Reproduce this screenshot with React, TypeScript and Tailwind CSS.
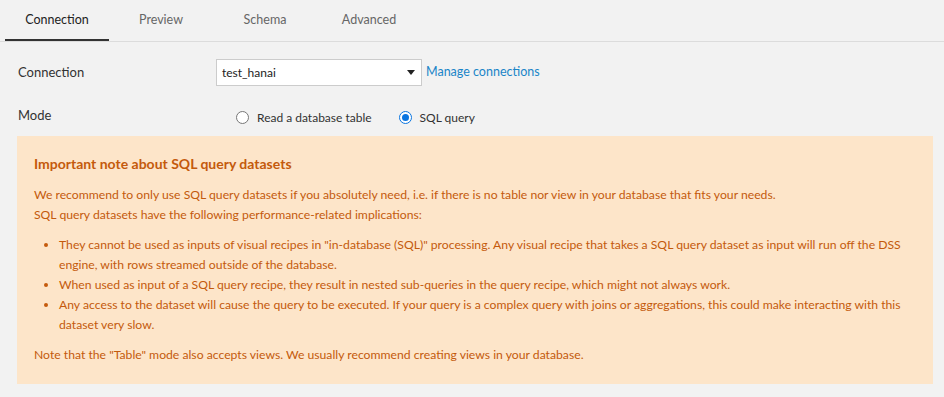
import { useState } from "react";

const tabs = ["Connection", "Preview", "Schema", "Advanced"];

const App = () => {
  const [mode, setMode] = useState("sql");
  return (
    <div className="w-[944px] h-[397px] bg-[#f2f2f2] font-['Lato',sans-serif] text-[#333] overflow-hidden">
      <div className="flex px-[5px] border-b border-[#dcdcdc] h-[42px]">
        {tabs.map((t, i) => (
          <div
            key={t}
            className={`w-[104px] flex items-center justify-center pt-[1px] text-[12.5px] border-b-2 ${
              i === 0 ? "border-[#333] text-[#222]" : "border-transparent text-[#666]"
            }`}
          >
            {t}
          </div>
        ))}
      </div>

      <div className="px-[17px]">
        <div className="flex items-center mt-[17px] h-[27px]">
          <div className="w-[199px] pl-[1px] pt-[1px] text-[13px]">Connection</div>
          <div className="w-[206px] h-[27px] bg-white border border-[#ccc] flex items-center justify-between pl-[5px] pr-[6px] text-[12px] text-[#222]">
            <span>test_hanai</span>
            <span className="w-0 h-0 border-l-[4px] border-r-[4px] border-t-[5px] border-l-transparent border-r-transparent border-t-[#222]" />
          </div>
          <a className="ml-[4px] text-[12.5px] text-[#1a85c8]">Manage connections</a>
        </div>

        <div className="flex items-center mt-[20px] h-[20px]">
          <div className="w-[219px] pl-[1px] text-[13px]">Mode</div>
          <label className="flex items-center gap-[8px] text-[12px] text-[#333] pt-[3px]" onClick={() => setMode("table")}>
            <span
              className={`w-[13px] h-[13px] rounded-full border bg-white flex items-center justify-center ${
                mode === "table" ? "border-[#0a75e0]" : "border-[#777]"
              }`}
            >
              {mode === "table" && <span className="w-[7px] h-[7px] rounded-full bg-[#0a75e0]" />}
            </span>
            Read a database table
          </label>
          <label className="flex items-center gap-[8px] text-[12px] text-[#333] ml-[27px] pt-[3px]" onClick={() => setMode("sql")}>
            <span
              className={`w-[13px] h-[13px] rounded-full border bg-white flex items-center justify-center ${
                mode === "sql" ? "border-[#0a75e0]" : "border-[#777]"
              }`}
            >
              {mode === "sql" && <span className="w-[7px] h-[7px] rounded-full bg-[#0a75e0]" />}
            </span>
            SQL query
          </label>
        </div>

        <div className="mt-[10px] w-[916px] h-[248px] bg-[#fde5c9] text-[#c45a0c] text-[12.2px] leading-[20px] pl-[17px] pr-[16px] pt-[18px]">
          <div className="font-bold text-[14px]">Important note about SQL query datasets</div>
          <p className="mt-[11px]">
            We recommend to only use SQL query datasets if you absolutely need, i.e. if there is no table nor view in your database that fits your needs.
            <br />
            SQL query datasets have the following performance-related implications:
          </p>
          <ul className="mt-[10px] list-disc pl-[25px]">
            <li>
              They cannot be used as inputs of visual recipes in "in-database (SQL)" processing. Any visual recipe that takes a SQL query dataset as input will run off the DSS engine, with rows streamed outside of the database.
            </li>
            <li>When used as input of a SQL query recipe, they result in nested sub-queries in the query recipe, which might not always work.</li>
            <li>
              Any access to the dataset will cause the query to be executed. If your query is a complex query with joins or aggregations, this could make interacting with this dataset very slow.
            </li>
          </ul>
          <p className="mt-[10px]">Note that the "Table" mode also accepts views. We usually recommend creating views in your database.</p>
        </div>
      </div>
    </div>
  );
};

export default App;
